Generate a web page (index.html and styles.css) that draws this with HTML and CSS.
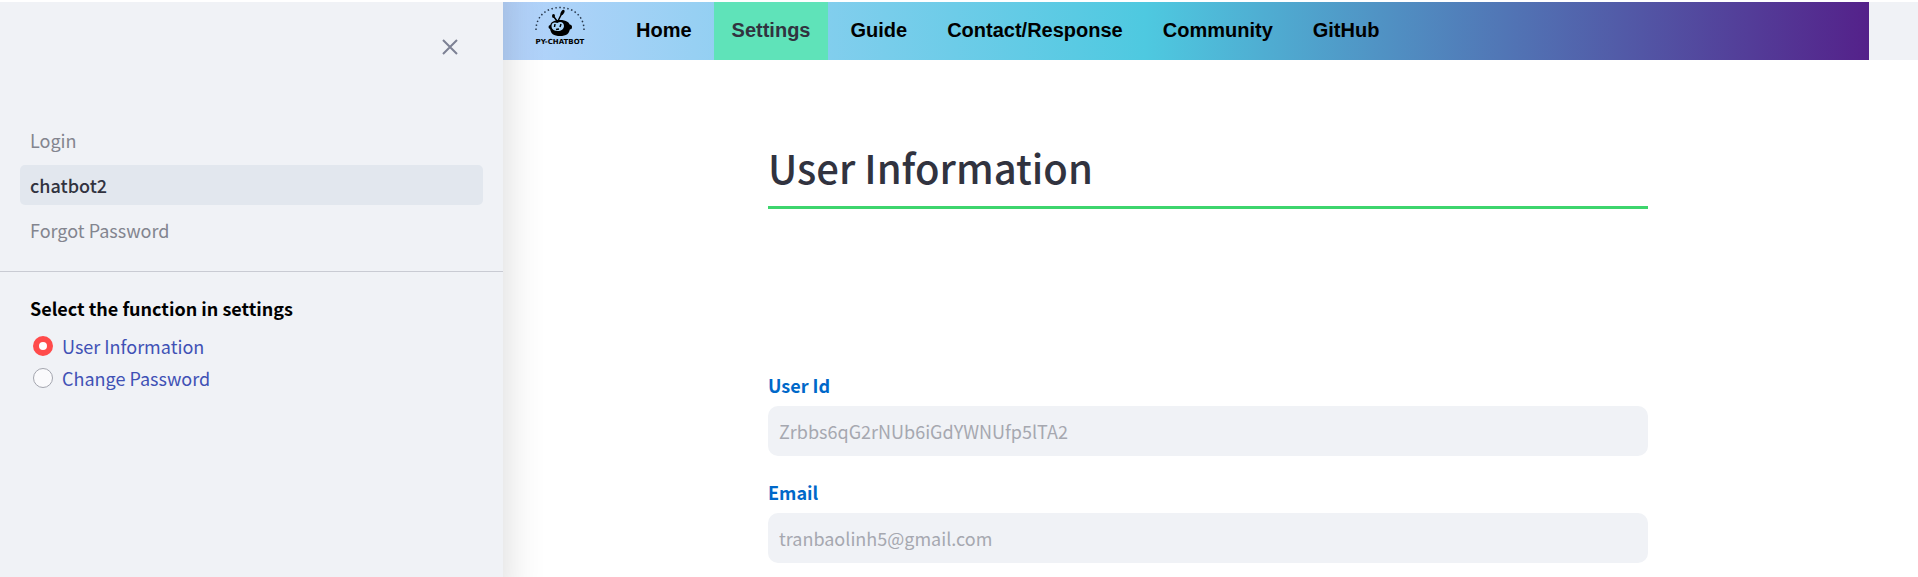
FILE: index.html
```html
<!DOCTYPE html>
<html lang="en">
<head>
<meta charset="utf-8">
<title>User Information</title>
<link rel="stylesheet" href="styles.css">
</head>
<body>
<div class="app">
  <aside class="sidebar">
    <div class="sidebar-top">
      <button class="close" type="button" aria-label="Close sidebar">
        <svg viewBox="0 0 16 16" width="16" height="16" aria-hidden="true"><path d="M1 1L15 15M15 1L1 15"/></svg>
      </button>
    </div>
    <nav class="pages">
      <a class="page" href="#login">Login</a>
      <a class="page page-active" href="#chatbot2">chatbot2</a>
      <a class="page" href="#forgot">Forgot Password</a>
    </nav>
    <fieldset class="functions">
      <legend class="functions-title">Select the function in settings</legend>
      <label class="option"><input class="radio" type="radio" name="function" checked>User Information</label>
      <label class="option"><input class="radio" type="radio" name="function">Change Password</label>
    </fieldset>
  </aside>
  <div class="content">
    <header class="header">
      <nav class="navbar">
        <a class="logo" href="#home" aria-label="PY-CHATBOT">
          <svg class="robot" viewBox="0 0 50 32" width="50" height="32" aria-hidden="true">
            <path class="arc" d="M1 24C1 10 12 1.500 25 1.500S49 10 49 24"/>
            <path class="antenna" d="M22 15L19 11M23 15L27 7"/>
            <ellipse cx="18.500" cy="10" rx="1.500" ry="2"/>
            <ellipse cx="27.500" cy="6.500" rx="1.600" ry="3" transform="rotate(30 27.500 6.500)"/>
            <circle cx="15.500" cy="21" r="2"/>
            <circle cx="34.500" cy="21" r="2.500"/>
            <path d="M15 21C15 16 19 14 25 14S35 16 35 21C35 28 31 30 25 30S15 28 15 21Z"/>
            <path class="face" d="M16.500 20C16.500 16 20 16 22.500 17C25 15 29 16 29 20C29 23 26 25 23 25S16.500 24 16.500 20Z"/>
            <path class="eyes" d="M20 18L19.500 21M26 18L25 21M21 23.500L24 23"/>
          </svg>
          <span class="logo-text">PY-CHATBOT</span>
        </a>
        <a class="tab" href="#home">Home</a>
        <a class="tab tab-active" href="#settings">Settings</a>
        <a class="tab" href="#guide">Guide</a>
        <a class="tab" href="#contact">Contact/Response</a>
        <a class="tab" href="#community">Community</a>
        <a class="tab" href="#github">GitHub</a>
      </nav>
    </header>
    <main class="main">
      <h1 class="title">User Information</h1>
      <form class="form">
        <div class="field">
          <label class="label" for="uid">User Id</label>
          <input class="input" id="uid" type="text" placeholder="Zrbbs6qG2rNUb6iGdYWNUfp5lTA2" disabled>
        </div>
        <div class="field">
          <label class="label" for="email">Email</label>
          <input class="input" id="email" type="text" placeholder="tranbaolinh5@gmail.com" disabled>
        </div>
      </form>
    </main>
  </div>
</div>
</body>
</html>
```
FILE: styles.css
```css
* {
  box-sizing: border-box;
}

body {
  margin: 0;
  padding-top: 2px;
  background: #fff;
  color: #31333f;
  font-family: "Noto Sans CJK SC", "Noto Sans", sans-serif;
  font-size: 18px;
  line-height: 32px;
}

.app {
  display: flex;
  min-height: calc(100vh - 2px);
  overflow: hidden;
}

.sidebar {
  position: relative;
  z-index: 1;
  flex: 0 0 503px;
  background: #f0f2f6;
  box-shadow: -32px 0 40px 32px rgba(0, 0, 0, 0.16);
}

.sidebar-top {
  display: flex;
  justify-content: flex-end;
  height: 118px;
  padding: 30px 38px;
}

.close {
  display: flex;
  align-items: center;
  justify-content: center;
  width: 30px;
  height: 30px;
  padding: 0;
  border: 0;
  background: none;
}

.close path {
  stroke: #7d8194;
  stroke-width: 2;
  fill: none;
}

.pages {
  display: flex;
  flex-direction: column;
  gap: 5px;
  padding: 0 20px 21px;
  border-bottom: 1px solid #c9cbd3;
}

.page {
  height: 40px;
  padding: 0 10px;
  border-radius: 5px;
  color: #83858f;
  line-height: 40px;
  text-decoration: none;
}

.page-active {
  background: #e2e7ee;
  color: #31333f;
  font-weight: 500;
}

.functions {
  margin: 0;
  padding: 20px 30px;
  border: 0;
}

.functions-title {
  float: left;
  width: 100%;
  padding: 0 0 6px;
  color: #000;
  font-weight: 700;
}

.option {
  display: flex;
  align-items: center;
  gap: 9px;
  width: 100%;
  clear: both;
  padding-left: 3px;
  color: #4051b5;
}

.radio {
  width: 20px;
  height: 20px;
  margin: 0;
  appearance: none;
  border: 1px solid #a3a5ae;
  border-radius: 50%;
  background: #fafafc;
}

.radio:checked {
  border: 6px solid #ff4b4b;
  background: #fff;
}

.content {
  flex: 1;
  min-width: 0;
}

.header {
  padding-right: 49px;
  background: #f0f2f6;
}

.navbar {
  display: flex;
  gap: 4px;
  height: 58px;
  padding-left: 27px;
  background: linear-gradient(90deg, #b6d3fb 0%, #4ec9e0 47%, #54218a 100%);
}

.logo {
  display: flex;
  flex-direction: column;
  align-items: center;
  width: 60px;
  margin-right: 24px;
  padding-top: 4px;
  color: #000;
  text-decoration: none;
}

.arc {
  fill: none;
  stroke: #26364a;
  stroke-width: 1.5;
  stroke-dasharray: 1.5 2.5;
}

.antenna {
  fill: none;
  stroke: #000;
  stroke-width: 1.5;
}

.face {
  fill: #a9d3f7;
}

.eyes {
  fill: none;
  stroke: #000;
  stroke-width: 1.5;
}

.logo-text {
  font: 700 7px/8px "DejaVu Sans", sans-serif;
}

.tab {
  padding: 0 18px;
  color: #000;
  font: 700 20px/56px "Liberation Sans", Arial, sans-serif;
  text-decoration: none;
}

.tab-active {
  background: #5fe3b9;
  color: #31333f;
}

.main {
  max-width: 885px;
  margin: 0 auto;
  padding: 77px 5px 0 0;
}

.title {
  margin: 0;
  padding-bottom: 9px;
  border-bottom: 3px solid #3dd56d;
  font-size: 40px;
  font-weight: 500;
  line-height: 60px;
}

.form {
  display: flex;
  flex-direction: column;
  gap: 20px;
  padding-top: 160px;
}

.label {
  display: block;
  padding-bottom: 5px;
  color: #0068c9;
  font-weight: 700;
}

.input {
  display: block;
  width: 100%;
  height: 50px;
  padding: 0 11px;
  border: 0;
  border-radius: 10px;
  background: #f0f2f6;
  font: inherit;
}

.input::placeholder {
  color: #a6a8b0;
}
```
